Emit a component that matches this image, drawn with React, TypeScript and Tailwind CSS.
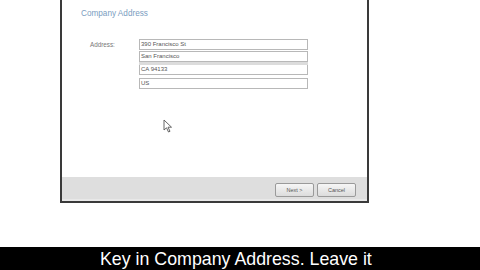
import React from "react";

const inputs = ["390 Francisco St", "San Francisco", "CA 94133", "US"];

function Cursor() {
    return (
        <svg className="absolute left-[163px] top-[119px]" width="10" height="14" viewBox="0 0 10 14">
            <path d="M1 1 L1 11 L3.5 8.8 L5.5 13 L7 12.3 L5 8.2 L8.5 8.2 Z" fill="#fff" stroke="#555" strokeWidth="0.9" />
        </svg>
    );
}

export default function App() {
    return (
        <main className="flex h-[270px] w-[480px] flex-col overflow-hidden bg-white" style={{ fontFamily: "'Liberation Sans', Arial, sans-serif" }}>
            <div className="h-[247px]">
                <div className="relative ml-[60px] flex h-[203px] w-[309px] flex-col border-x-2 border-b-2 border-[#3a3a3a] bg-white">
                    <div className="flex-1 pl-[19px] pt-[9px]">
                        <p className="text-[8.2px] leading-[10px] text-[#7a9cc0]">Company Address</p>
                        <div className="mt-[20px] flex pl-[9px]">
                            <span className="w-[49px] pt-[2px] text-[6.3px] leading-[8px] text-[#777]">Address:</span>
                            <div className="flex w-[169px] flex-col">
                                <div className="h-[11px] border border-[#b8b8b8] px-[1px] text-[6px] leading-[9px] text-[#555]">{inputs[0]}</div>
                                <div className="mt-[1px] flex h-[11px] flex-col border border-[#b8b8b8] text-[6px] leading-[9px] text-[#555]">
                                    <span className="px-[1px]">{inputs[1]}</span>
                                </div>
                                <div className="h-[3px] bg-[#dcdcdc]" />
                                <div className="h-[10px] border border-t-0 border-[#b8b8b8] px-[1px] text-[6px] leading-[9px] text-[#555]">{inputs[2]}</div>
                                <div className="mt-[3px] h-[11px] border border-[#b8b8b8] px-[1px] text-[6px] leading-[9px] text-[#555]">{inputs[3]}</div>
                            </div>
                        </div>
                    </div>
                    <div className="flex h-[22px] items-start justify-end gap-[3px] bg-[#dedede] pr-[11px] pt-[6px]">
                        <button type="button" className="h-[14px] w-[39px] rounded-[2px] border border-[#9a9a9a] bg-gradient-to-b from-[#f6f6f6] to-[#dcdcdc] text-[5.5px] leading-[12px] text-[#555]">
                            Next &gt;
                        </button>
                        <button type="button" className="h-[14px] w-[39px] rounded-[2px] border border-[#9a9a9a] bg-gradient-to-b from-[#f6f6f6] to-[#dcdcdc] text-[5.5px] leading-[12px] text-[#555]">
                            Cancel
                        </button>
                    </div>
                    <div className="h-[2px] bg-[#e8e8e8]" />
                </div>
            </div>
            <Cursor />
            <div className="flex h-[23px] items-center bg-black pl-[100px]">
                <span className="text-[17.8px] leading-[20px] text-white">Key in Company Address. Leave it</span>
            </div>
        </main>
    );
}
